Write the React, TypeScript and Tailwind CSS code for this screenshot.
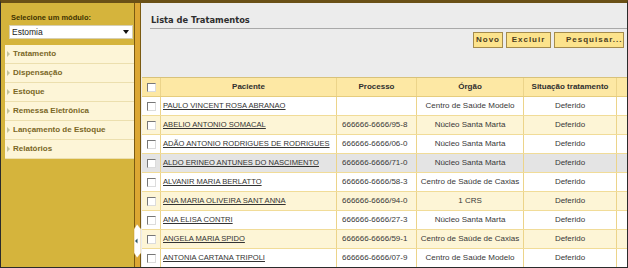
import React from 'react';

type Row = { nome: string; processo: string; orgao: string; situacao: string };

const rows: Row[] = [
    { nome: 'PAULO VINCENT ROSA ABRANAO', processo: '', orgao: 'Centro de Saúde Modelo', situacao: 'Deferido' },
    { nome: 'ABELIO ANTONIO SOMACAL', processo: '666666-6666/95-8', orgao: 'Núcleo Santa Marta', situacao: 'Deferido' },
    { nome: 'ADÃO ANTONIO RODRIGUES DE RODRIGUES', processo: '666666-6666/06-0', orgao: 'Núcleo Santa Marta', situacao: 'Deferido' },
    { nome: 'ALDO ERINEO ANTUNES DO NASCIMENTO', processo: '666666-6666/71-0', orgao: 'Núcleo Santa Marta', situacao: 'Deferido' },
    { nome: 'ALVANIR MARIA BERLATTO', processo: '666666-6666/58-3', orgao: 'Centro de Saúde de Caxias', situacao: 'Deferido' },
    { nome: 'ANA MARIA OLIVEIRA SANT ANNA', processo: '666666-6666/94-0', orgao: '1 CRS', situacao: 'Deferido' },
    { nome: 'ANA ELISA CONTRI', processo: '666666-6666/27-3', orgao: 'Núcleo Santa Marta', situacao: 'Deferido' },
    { nome: 'ANGELA MARIA SPIDO', processo: '666666-6666/59-1', orgao: 'Centro de Saúde de Caxias', situacao: 'Deferido' },
    { nome: 'ANTONIA CARTANA TRIPOLI', processo: '666666-6666/07-9', orgao: 'Centro de Saúde Modelo', situacao: 'Deferido' },
];

const menu = ['Tratamento', 'Dispensação', 'Estoque', 'Remessa Eletrônica', 'Lançamento de Estoque', 'Relatórios'];

function Check() {
    return (
        <span className="block w-[9px] h-[9px] bg-white border border-t-[#777] border-l-[#777] border-b-[#dcdcdc] border-r-[#dcdcdc]" />
    );
}

export default function App() {
    return (
        <div className="w-[628px] h-[268px] flex overflow-hidden border border-[#2b2b2b] border-t-[3px] border-t-[#6a5016] bg-[#d5b43c] font-['Liberation_Sans',Arial,sans-serif]">
            {/* sidebar */}
            <div className="w-[133px] shrink-0 flex flex-col">
                <div className="pt-[10px] pl-[10px] text-[7.5px] leading-[9px] font-bold text-[#3f3300]">
                    Selecione um módulo:
                </div>
                <div className="mt-[3px] ml-[8px] mr-[1px] h-[14px] bg-white border border-[#d6cfb2] flex items-center justify-between pl-[2px] pr-[3px]">
                    <span className="text-[8.5px] text-[#222]">Estomia</span>
                    <svg width="6" height="4" viewBox="0 0 6 4">
                        <path d="M0 0 L6 0 L3 4 Z" fill="#111" />
                    </svg>
                </div>
                <div className="mt-[6px] ml-[4px] bg-[#fdf5d7]">
                    {menu.map((m) => (
                        <div key={m} className="h-[19px] border-b border-[#ecdfae] flex items-center gap-[3px] pl-[2px]">
                            <svg width="3" height="6" viewBox="0 0 3 6">
                                <path d="M0 0 L3 3 L0 6 Z" fill="#c2c29a" />
                            </svg>
                            <span className="text-[8px] font-bold text-[#7a6726]">{m}</span>
                        </div>
                    ))}
                </div>
            </div>

            {/* divider */}
            <div className="relative w-[7px] shrink-0 bg-[#dca733] border-l border-r border-[#7a5a12]">
                <svg className="absolute top-[221px] left-[-2px]" width="8" height="34" viewBox="0 0 8 34">
                    <path d="M4 0 L8 5 L8 29 L4 34 L1 29 L1 5 Z" fill="#fff" stroke="#c99a2a" strokeWidth="0.5" />
                    <path d="M2 17 L4.5 14.5 L4.5 19.5 Z" fill="#2e5566" />
                </svg>
            </div>

            {/* content */}
            <div className="flex-1 bg-[#ececec] flex flex-col min-w-0">
                <div className="ml-[9px] pt-[12px] pb-[2px] pl-px border-b border-[#a9a9a9] text-[8.3px] leading-[11px] font-bold text-[#2e2e2e] font-['DejaVu_Sans',Verdana,sans-serif]">
                    Lista de Tratamentos
                </div>
                <div className="mt-[3px] pr-[3px] flex justify-end gap-[3px]">
                    <button className="w-[30px] h-[16px] bg-[#fce38c] border border-[#a48b4c] text-[8px] font-bold tracking-[1px] text-[#4b3d1e]">
                        Novo
                    </button>
                    <button className="w-[45px] h-[16px] bg-[#fce38c] border border-[#a48b4c] text-[8px] font-bold tracking-[1px] text-[#4b3d1e]">
                        Excluir
                    </button>
                    <button className="w-[70px] h-[16px] bg-[#fce38c] border border-[#a48b4c] text-[8px] font-bold tracking-[1px] text-[#4b3d1e] text-left pl-[11px]">
                        Pesquisar...
                    </button>
                </div>

                <div className="mt-[29px] ml-px text-[8px] text-[#383838] border-t border-[#d8c27a]">
                    <div className="h-[19px] flex bg-[#fde8a4] border-b border-[#e6cd7e] font-bold text-[#2f2f2f]">
                        <div className="w-[19px] flex items-center justify-center border-r border-[#ecd48a]">
                            <Check />
                        </div>
                        <div className="w-[176px] flex items-center justify-center border-r border-[#ecd48a]">Paciente</div>
                        <div className="w-[80px] flex items-center justify-center border-r border-[#ecd48a]">Processo</div>
                        <div className="w-[107px] flex items-center justify-center border-r border-[#ecd48a]">Órgão</div>
                        <div className="w-[93px] flex items-center justify-center border-r border-[#ecd48a]">Situação tratamento</div>
                        <div className="flex-1" />
                    </div>
                    {rows.map((r, i) => (
                        <div
                            key={r.nome}
                            className={
                                'h-[19px] flex border-b border-[#f1dc98] ' +
                                (i === 3 ? 'bg-[#e4e4e4]' : i % 2 === 1 ? 'bg-[#fdf5d6]' : 'bg-white')
                            }
                        >
                            <div className="w-[19px] flex items-center justify-center border-r border-[#ecd48a]">
                                <Check />
                            </div>
                            <div className="w-[176px] flex items-center pl-[2px] border-r border-[#ecd48a] whitespace-nowrap overflow-hidden">
                                <span className="underline text-[7.6px] text-[#333]">{r.nome}</span>
                            </div>
                            <div className="w-[80px] flex items-center pl-[5px] border-r border-[#ecd48a] whitespace-nowrap">{r.processo}</div>
                            <div className="w-[107px] flex items-center justify-center border-r border-[#ecd48a] whitespace-nowrap">{r.orgao}</div>
                            <div className="w-[93px] flex items-center justify-center border-r border-[#ecd48a]">{r.situacao}</div>
                            <div className="flex-1" />
                        </div>
                    ))}
                </div>
            </div>
        </div>
    );
}
